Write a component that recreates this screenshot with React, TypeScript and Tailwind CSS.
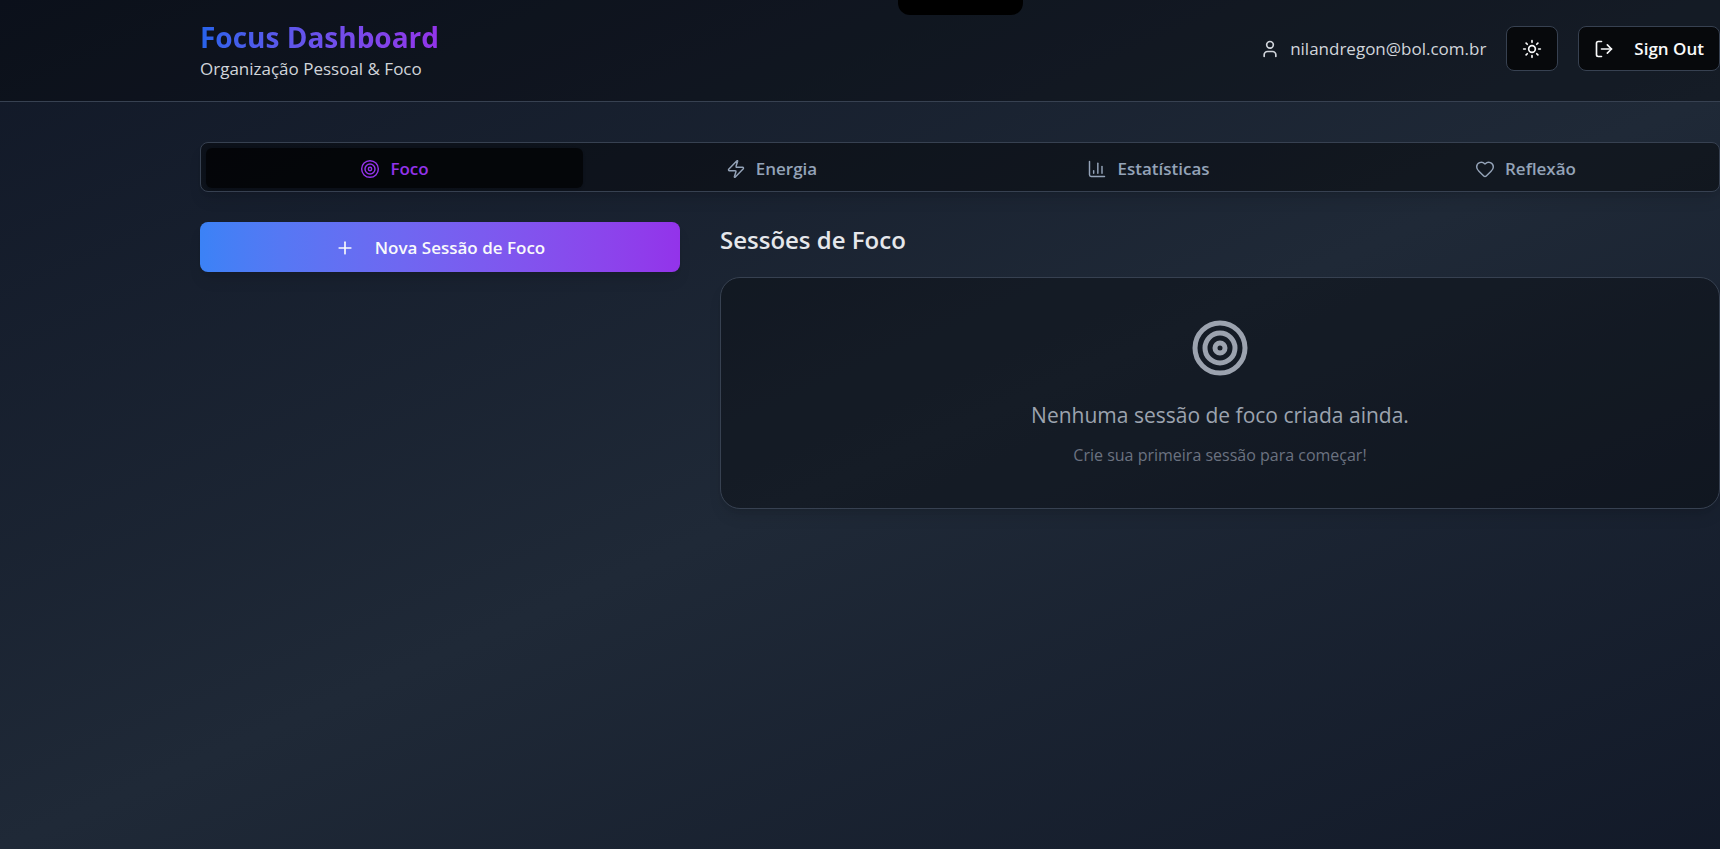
import { useState } from "react";
import { ChartColumn, Heart, LogOut, Plus, Sun, Target, User, Zap } from "lucide-react";

const tabs = [
  { id: "foco", label: "Foco", icon: Target },
  { id: "energia", label: "Energia", icon: Zap },
  { id: "estatisticas", label: "Estatísticas", icon: ChartColumn },
  { id: "reflexao", label: "Reflexão", icon: Heart },
];

function Header() {
  return (
    <header className="border-b border-[#374151] bg-black/30 pl-[200px]">
      <div className="flex items-start justify-between pt-[18px] pb-[20px]">
        <div>
          <h1 className="w-fit bg-linear-to-r from-[#2563eb] to-[#9333ea] bg-clip-text text-[28px] leading-[38px] font-bold text-transparent">
            Focus Dashboard
          </h1>
          <p className="text-[17px] leading-[25px] text-[#d1d5db]">Organização Pessoal &amp; Foco</p>
        </div>
        <div className="flex items-center gap-5 pt-2">
          <div className="flex items-center gap-2.5 text-[#d1d5db]">
            <User size={20} />
            <span className="text-[17px] leading-[25px]">nilandregon@bol.com.br</span>
          </div>
          <button
            type="button"
            aria-label="Alternar tema"
            className="flex h-[45px] w-[52px] items-center justify-center rounded-lg border border-[#374151] bg-[#07090c] text-gray-50"
          >
            <Sun size={20} />
          </button>
          <button
            type="button"
            className="flex h-[45px] items-center gap-5 rounded-lg border border-[#374151] bg-[#07090c] px-[15px] text-[17px] font-semibold text-gray-50"
          >
            <LogOut size={20} />
            Sign Out
          </button>
        </div>
      </div>
    </header>
  );
}

export default function App() {
  const [active, setActive] = useState("foco");

  return (
    <div className="relative min-h-screen overflow-x-hidden bg-[#111827] bg-linear-to-br from-[#111827] via-[#1f2937] to-[#111827] bg-[length:112%_100%] bg-no-repeat font-['Open_Sans',sans-serif]">
      <div className="absolute top-0 left-[898px] h-[15px] w-[125px] rounded-b-xl bg-black" />
      <Header />
      <main className="pt-10 pl-[200px]">
        <div
          role="tablist"
          className="grid h-[50px] grid-cols-4 rounded-lg border border-[#374151] bg-black/40 px-[5px] pt-[5px] pb-[3px] shadow-lg"
        >
          {tabs.map(({ id, label, icon: Icon }) => (
            <button
              key={id}
              type="button"
              role="tab"
              aria-selected={active === id}
              onClick={() => setActive(id)}
              className={`flex items-center justify-center gap-2.5 rounded-md pt-px text-[17px] font-semibold ${
                active === id ? "bg-black/65 text-[#9333ea] shadow-sm" : "text-[#94a3b8]"
              }`}
            >
              <Icon size={20} strokeWidth={1.75} />
              {label}
            </button>
          ))}
        </div>

        <div className="mt-[30px] grid grid-cols-[480fr_1000fr] items-start gap-10">
          <button
            type="button"
            className="flex h-[50px] items-center justify-center gap-5 rounded-lg bg-linear-to-r from-[#3b82f6] to-[#9333ea] pt-px text-[17px] font-semibold text-gray-50 shadow-lg"
          >
            <Plus size={20} />
            Nova Sessão de Foco
          </button>

          <section>
            <h2 className="text-[24px] leading-[35px] font-semibold text-[#e5e7eb]">Sessões de Foco</h2>
            <div className="mt-5 flex flex-col items-center rounded-[20px] border border-[#374151] bg-black/30 p-10 text-center shadow-lg">
              <Target size={60} className="text-[#9ca3af]" />
              <p className="mt-5 text-[21px] leading-[35px] text-[#9ca3af]">
                Nenhuma sessão de foco criada ainda.
              </p>
              <p className="mt-2.5 text-[16px] leading-[25px] text-[#6b7280]">
                Crie sua primeira sessão para começar!
              </p>
            </div>
          </section>
        </div>
      </main>
    </div>
  );
}
